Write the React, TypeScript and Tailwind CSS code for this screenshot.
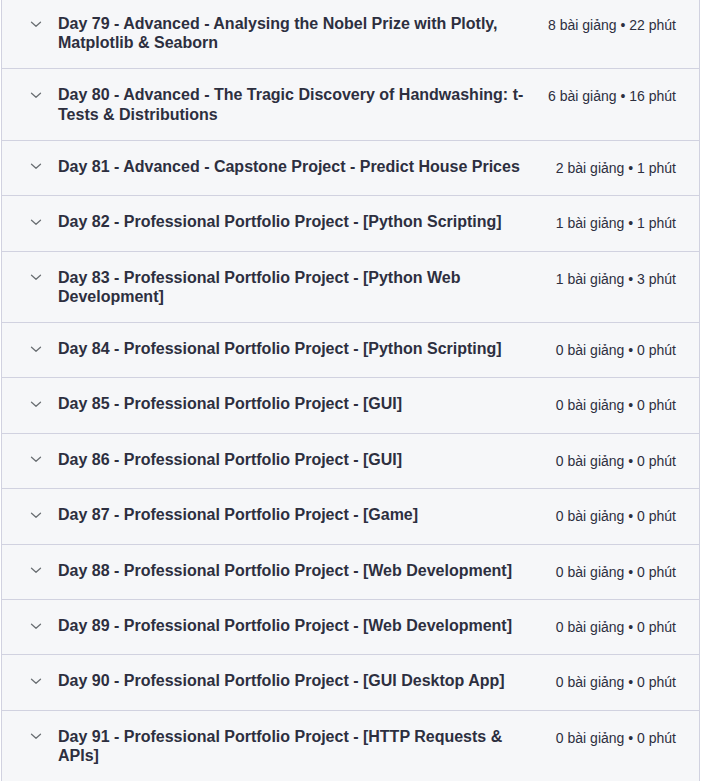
import React from "react";

const sections = [
  { title: "Day 79 - Advanced - Analysing the Nobel Prize with Plotly, Matplotlib & Seaborn", lectures: 8, minutes: 22 },
  { title: "Day 80 - Advanced - The Tragic Discovery of Handwashing: t-Tests & Distributions", lectures: 6, minutes: 16 },
  { title: "Day 81 - Advanced - Capstone Project - Predict House Prices", lectures: 2, minutes: 1 },
  { title: "Day 82 - Professional Portfolio Project - [Python Scripting]", lectures: 1, minutes: 1 },
  { title: "Day 83 - Professional Portfolio Project - [Python Web Development]", lectures: 1, minutes: 3 },
  { title: "Day 84 - Professional Portfolio Project - [Python Scripting]", lectures: 0, minutes: 0 },
  { title: "Day 85 - Professional Portfolio Project - [GUI]", lectures: 0, minutes: 0 },
  { title: "Day 86 - Professional Portfolio Project - [GUI]", lectures: 0, minutes: 0 },
  { title: "Day 87 - Professional Portfolio Project - [Game]", lectures: 0, minutes: 0 },
  { title: "Day 88 - Professional Portfolio Project - [Web Development]", lectures: 0, minutes: 0 },
  { title: "Day 89 - Professional Portfolio Project - [Web Development]", lectures: 0, minutes: 0 },
  { title: "Day 90 - Professional Portfolio Project - [GUI Desktop App]", lectures: 0, minutes: 0 },
  { title: "Day 91 - Professional Portfolio Project - [HTTP Requests & APIs]", lectures: 0, minutes: 0 },
];

function Chevron() {
  return (
    <svg width="12" height="12" viewBox="0 0 12 12" fill="none" className="shrink-0">
      <path d="M1.5 4.2 L6 8.2 L10.5 4.2" stroke="#6a6f73" strokeWidth="1.3" strokeLinecap="round" strokeLinejoin="round" />
    </svg>
  );
}

export default function App() {
  return (
    <div className="min-h-screen bg-white overflow-hidden">
      <div className="ml-[1px] w-[699px] -mt-[2px] border-x border-[#d1d2e0] bg-[#f6f7f9] font-['Liberation_Sans',Arial,sans-serif] text-[#2d2f3f]">
        {sections.map((s) => (
          <div
            key={s.title}
            className="flex items-start border-b border-[#d1d2e0] py-4 pl-[28px] pr-[23px]"
          >
            <div className="flex h-[19.2px] items-center">
              <Chevron />
            </div>
            <p className="ml-4 flex-1 text-base font-bold leading-[1.2]">{s.title}</p>
            <span className="ml-4 whitespace-nowrap text-sm leading-[22.4px]">
              {s.lectures} bài giảng • {s.minutes} phút
            </span>
          </div>
        ))}
      </div>
    </div>
  );
}
